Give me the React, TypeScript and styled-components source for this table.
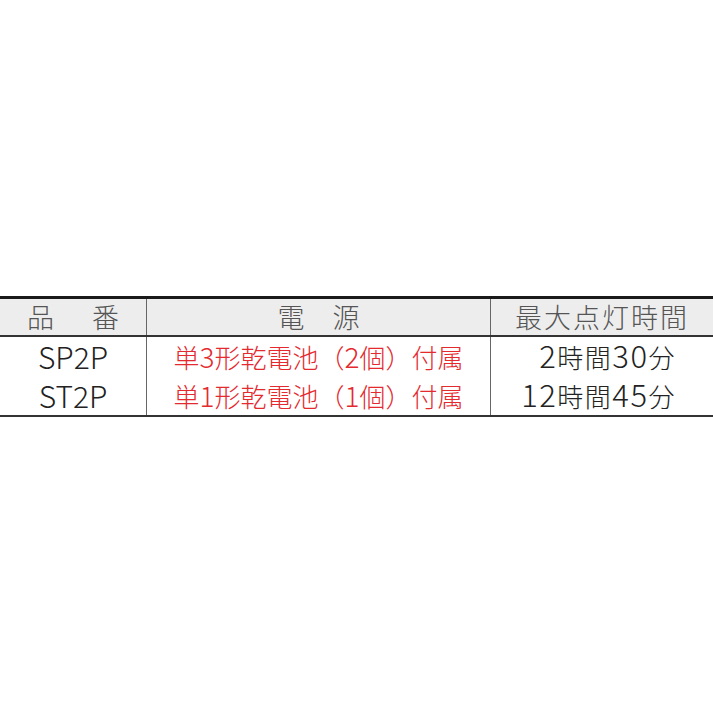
import React from "react";
import styled, { createGlobalStyle } from "styled-components";

const Global = createGlobalStyle`
  html, body { margin: 0; padding: 0; background: #ffffff; }
  body { font-family: "Noto Sans CJK JP", "Noto Sans", sans-serif; }
`;

const Page = styled.div`
  width: 713px;
  height: 713px;
  padding-top: 296px;
  box-sizing: border-box;
`;

const Table = styled.table`
  width: 713px;
  border-collapse: collapse;
  table-layout: fixed;
  border-top: 3px solid #1a1a1a;
  border-bottom: 2px solid #333333;
`;

const HeadRow = styled.tr`
  background: #ededed;
  border-bottom: 2px solid #333333;
`;

const HeadCell = styled.th<{ $w?: number; $spacing?: number }>`
  width: ${(p) => (p.$w ? `${p.$w}px` : "auto")};
  height: 36px;
  padding: 0;
  font-weight: 300;
  font-size: 27px;
  line-height: 36px;
  letter-spacing: ${(p) => p.$spacing ?? 0}px;
  color: #555555;
  text-align: center;
  border-left: 1.5px solid #666666;
  &:first-child { border-left: none; }
`;

const Spaced = styled.span<{ $gap: number }>`
  display: inline-flex;
  gap: ${(p) => p.$gap}px;
`;

const Cell = styled.td<{ $align?: "center" | "right"; $red?: boolean; $latin?: boolean }>`
  height: 39px;
  padding: 0 ${(p) => (p.$align === "right" ? "37px" : "0")} 0 0;
  font-weight: 300;
  font-size: ${(p) => (p.$latin ? "30px" : "26px")};
  line-height: 37px;
  letter-spacing: ${(p) => (p.$align === "right" ? "1.5px" : "0")};
  color: ${(p) => (p.$red ? "#e42a2f" : "#222222")};
  text-align: ${(p) => p.$align ?? "center"};
  white-space: nowrap;
  border-left: 1.5px solid #666666;
  &:first-child { border-left: none; }
`;

const Digits = styled.span<{ $size: number }>`
  display: inline-block;
  font-size: ${(p) => p.$size}px;
  line-height: 30px;
`;

const rows = [
  { name: "SP2P", battery: ["単", "3", "形乾電池（", "2", "個）付属"], time: ["2", "時間", "30", "分"] },
  { name: "ST2P", battery: ["単", "1", "形乾電池（", "1", "個）付属"], time: ["12", "時間", "45", "分"] },
];

const renderParts = (parts: string[], size: number) =>
  parts.map((p, i) =>
    /^\d+$/.test(p) ? (
      <Digits key={i} $size={size}>
        {p}
      </Digits>
    ) : (
      <span key={i}>{p}</span>
    )
  );

export default function App() {
  return (
    <>
      <Global />
      <Page>
        <Table>
          <thead>
            <HeadRow>
              <HeadCell $w={146}>
                <Spaced $gap={38}>
                  <span>品</span>
                  <span>番</span>
                </Spaced>
              </HeadCell>
              <HeadCell $w={343}>
                <Spaced $gap={28}>
                  <span>電</span>
                  <span>源</span>
                </Spaced>
              </HeadCell>
              <HeadCell $spacing={2}>最大点灯時間</HeadCell>
            </HeadRow>
          </thead>
          <tbody>
            {rows.map((r) => (
              <tr key={r.name}>
                <Cell $latin>{r.name}</Cell>
                <Cell $red>{renderParts(r.battery, 28)}</Cell>
                <Cell $align="right">{renderParts(r.time, 31)}</Cell>
              </tr>
            ))}
          </tbody>
        </Table>
      </Page>
    </>
  );
}
